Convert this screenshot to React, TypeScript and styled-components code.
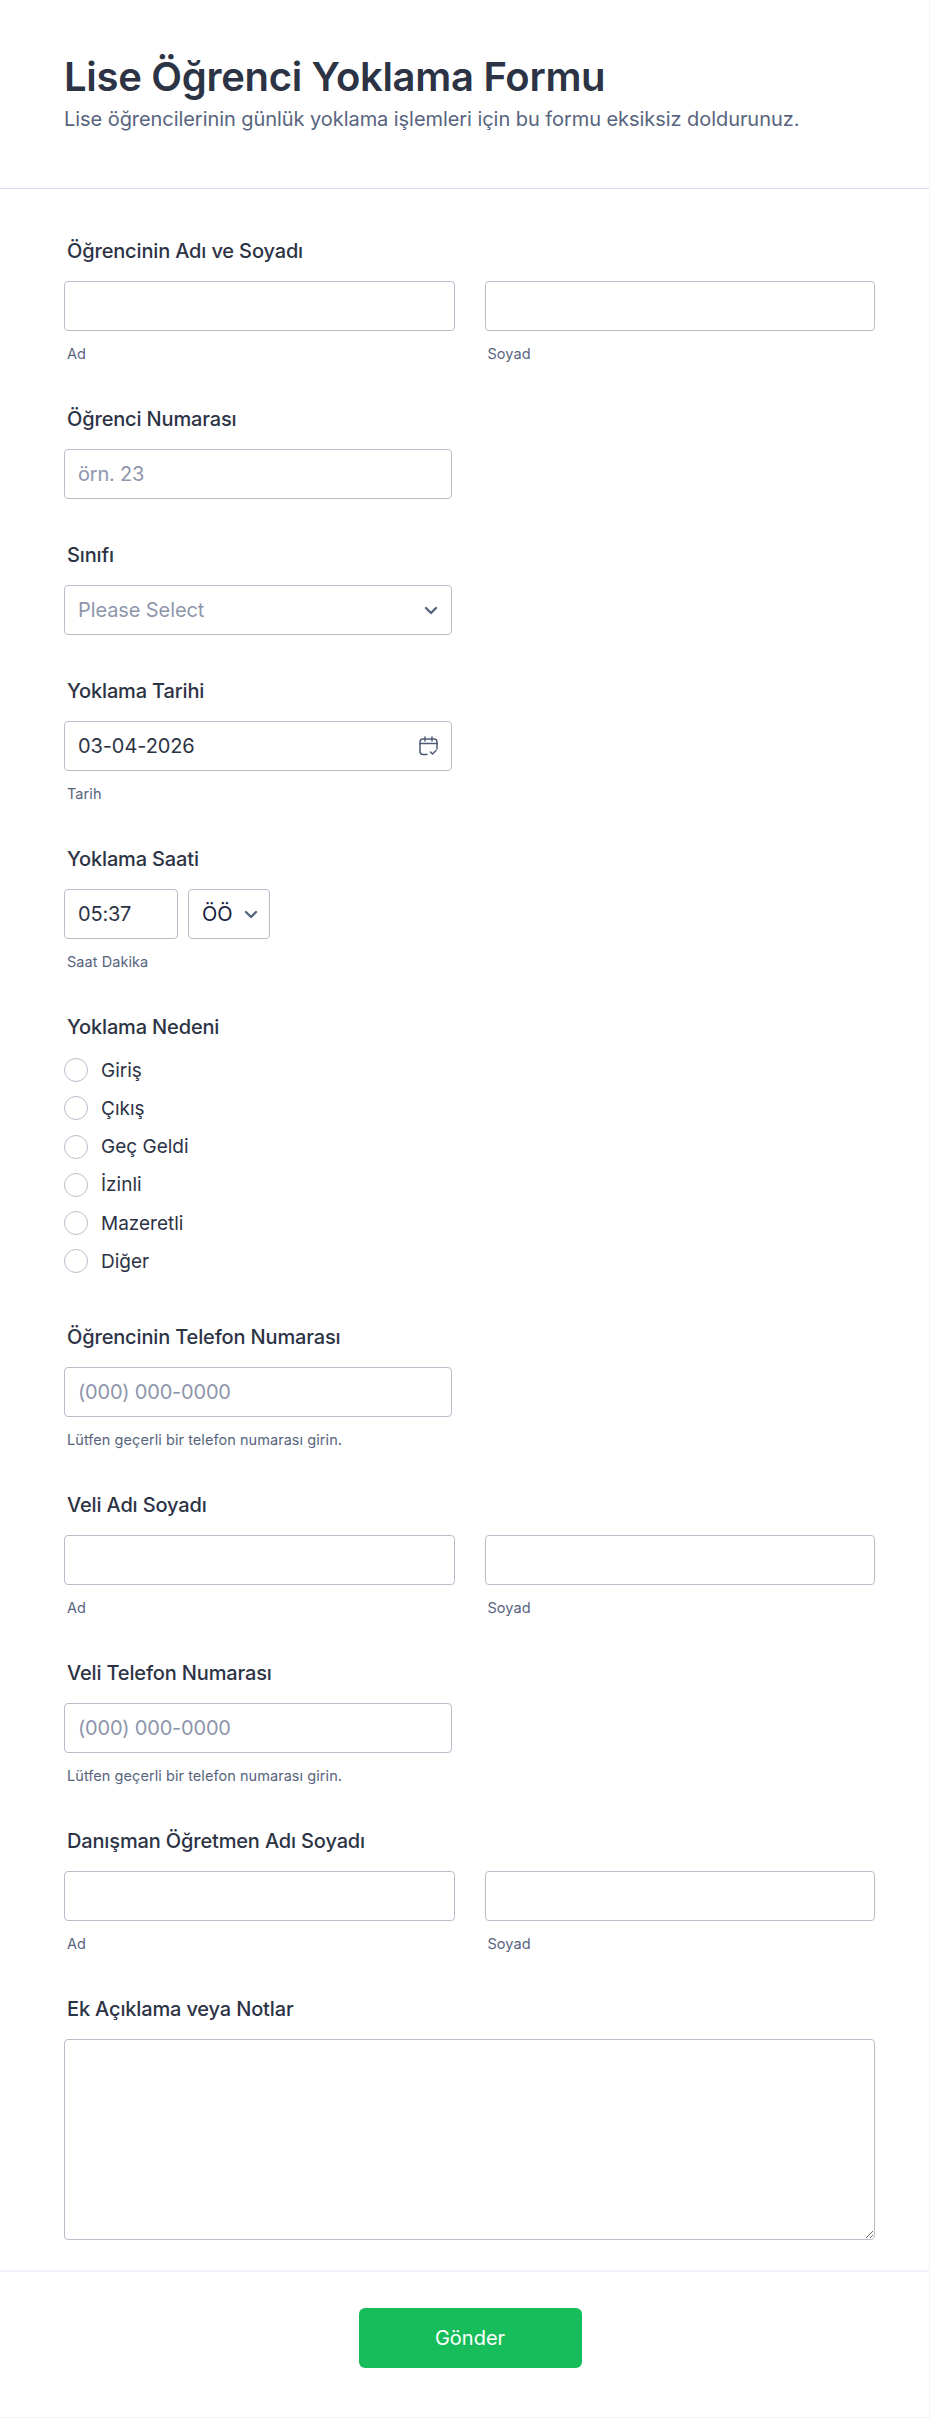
import { createGlobalStyle, styled } from "styled-components";

const GlobalStyle = createGlobalStyle`
  html, body {
    margin: 0;
    padding: 0;
    background: #fff;
  }
  * {
    box-sizing: border-box;
  }
`;

const Page = styled.div`
  width: 930px;
  height: 2418px;
  font-family: Inter, "Noto Sans", sans-serif;
  color: #2c3345;
  border-right: 1px solid #f3f3fe;
  border-bottom: 1px solid #f3f3fe;
`;

const Header = styled.header`
  height: 189px;
  padding: 52px 64px 0;
  border-bottom: 1px solid #d8dae9;
`;

const Title = styled.h1`
  margin: 0;
  font-size: 40px;
  line-height: 50px;
  font-weight: 600;
  letter-spacing: -0.3px;
`;

const Subtitle = styled.p`
  margin: 3px 0 0;
  font-size: 20px;
  line-height: 28px;
  letter-spacing: -0.06px;
  color: #57647e;
`;

const Body = styled.div`
  padding: 50px 54px 0 64px;
`;

const Field = styled.div`
  padding-bottom: 44px;
`;

const Label = styled.div`
  margin: 0 0 18px 3px;
  font-size: 20px;
  line-height: 24px;
  font-weight: 500;
  letter-spacing: -0.15px;
`;

const Row = styled.div`
  display: flex;
  gap: 30px;
`;

const Column = styled.div`
  width: 391px;
`;

const Input = styled.input`
  display: block;
  width: 100%;
  height: 50px;
  padding: 0 13px;
  border: 1px solid #b8bdc9;
  border-radius: 4px;
  background: #fff;
  font-family: inherit;
  font-size: 20px;
  letter-spacing: -0.2px;
  color: #2c3345;
  outline: none;

  &::placeholder {
    color: #8d96ab;
    opacity: 1;
  }
`;

const Sub = styled.div`
  margin: 14px 0 0 3px;
  font-size: 14.500px;
  line-height: 18px;
  letter-spacing: 0.06px;
  color: #57647e;
`;

const Control = styled.div<{ $muted?: boolean }>`
  display: flex;
  align-items: center;
  justify-content: space-between;
  height: 50px;
  padding: 0 13px;
  border: 1px solid #b8bdc9;
  border-radius: 4px;
  font-size: 20px;
  letter-spacing: -0.1px;
  color: ${(props) => (props.$muted ? "#8d96ab" : "#2c3345")};
`;

const Narrow = styled.div`
  width: 388px;
`;

const TimeRow = styled.div`
  display: flex;
  gap: 10px;
`;

const TimeInput = styled(Input)`
  width: 114px;
`;

const Meridiem = styled(Control)`
  width: 82px;
  padding-right: 11px;
  color: #141c3a;
`;

const Radios = styled.div`
  display: flex;
  flex-direction: column;
  gap: 14.300px;
  padding: 1px 0 8px;
`;

const RadioRow = styled.label`
  display: flex;
  align-items: center;
  gap: 13px;
  height: 24px;
  font-size: 19px;
`;

const Circle = styled.span`
  width: 24px;
  height: 24px;
  border: 1px solid #b8bdc9;
  border-radius: 50%;
`;

const TextArea = styled.textarea`
  display: block;
  width: 811px;
  height: 201px;
  border: 1px solid #b8bdc9;
  border-radius: 4px;
  resize: vertical;
  outline: none;
`;

const Footer = styled.footer`
  margin-top: -14px;
  padding: 36px 0 0 11px;
  display: flex;
  justify-content: center;
  border-top: 2px solid #f3f3fe;
`;

const Submit = styled.button`
  width: 223px;
  height: 60px;
  border: 0;
  border-radius: 6px;
  background: #18bd5b;
  color: #fff;
  font-family: inherit;
  font-size: 20px;
  font-weight: 400;
`;

const Chevron = () => (
  <svg width="14" height="9" viewBox="0 0 14 9" fill="none">
    <path d="M2 2l5 5 5-5" stroke="#57647e" strokeWidth="2.400" strokeLinecap="round" strokeLinejoin="round" />
  </svg>
);

const CalendarIcon = () => (
  <svg width="19" height="20" viewBox="0 0 19 20" fill="none" stroke="#4f5b76" strokeWidth="1.500" strokeLinecap="round" strokeLinejoin="round">
    <path d="M8 18.500H4a3 3 0 0 1-3-3V6a3 3 0 0 1 3-3h11a3 3 0 0 1 3 3v7" />
    <path d="M1 7.500h17M6 1v4M13 1v4" />
    <path d="M11.500 16l2 2 3.500-3.500" />
  </svg>
);

const NameField = ({ label }: { label: string }) => (
  <Field>
    <Label>{label}</Label>
    <Row>
      <Column>
        <Input />
        <Sub>Ad</Sub>
      </Column>
      <Column>
        <Input />
        <Sub>Soyad</Sub>
      </Column>
    </Row>
  </Field>
);

const PhoneField = ({ label }: { label: string }) => (
  <Field>
    <Label>{label}</Label>
    <Narrow>
      <Input placeholder="(000) 000-0000" />
    </Narrow>
    <Sub>Lütfen geçerli bir telefon numarası girin.</Sub>
  </Field>
);

const reasons = ["Giriş", "Çıkış", "Geç Geldi", "İzinli", "Mazeretli", "Diğer"];

export default function App() {
  return (
    <Page>
      <GlobalStyle />
      <Header>
        <Title>Lise Öğrenci Yoklama Formu</Title>
        <Subtitle>Lise öğrencilerinin günlük yoklama işlemleri için bu formu eksiksiz doldurunuz.</Subtitle>
      </Header>
      <Body>
        <NameField label="Öğrencinin Adı ve Soyadı" />
        <Field>
          <Label>Öğrenci Numarası</Label>
          <Narrow>
            <Input placeholder="örn. 23" />
          </Narrow>
        </Field>
        <Field>
          <Label>Sınıfı</Label>
          <Narrow>
            <Control $muted>
              Please Select
              <Chevron />
            </Control>
          </Narrow>
        </Field>
        <Field>
          <Label>Yoklama Tarihi</Label>
          <Narrow>
            <Control>
              03-04-2026
              <CalendarIcon />
            </Control>
          </Narrow>
          <Sub>Tarih</Sub>
        </Field>
        <Field>
          <Label>Yoklama Saati</Label>
          <TimeRow>
            <TimeInput defaultValue="05:37" />
            <Meridiem>
              ÖÖ
              <Chevron />
            </Meridiem>
          </TimeRow>
          <Sub>Saat Dakika</Sub>
        </Field>
        <Field>
          <Label>Yoklama Nedeni</Label>
          <Radios>
            {reasons.map((reason) => (
              <RadioRow key={reason}>
                <Circle />
                {reason}
              </RadioRow>
            ))}
          </Radios>
        </Field>
        <PhoneField label="Öğrencinin Telefon Numarası" />
        <NameField label="Veli Adı Soyadı" />
        <PhoneField label="Veli Telefon Numarası" />
        <NameField label="Danışman Öğretmen Adı Soyadı" />
        <Field>
          <Label>Ek Açıklama veya Notlar</Label>
          <TextArea />
        </Field>
      </Body>
      <Footer>
        <Submit>Gönder</Submit>
      </Footer>
    </Page>
  );
}
